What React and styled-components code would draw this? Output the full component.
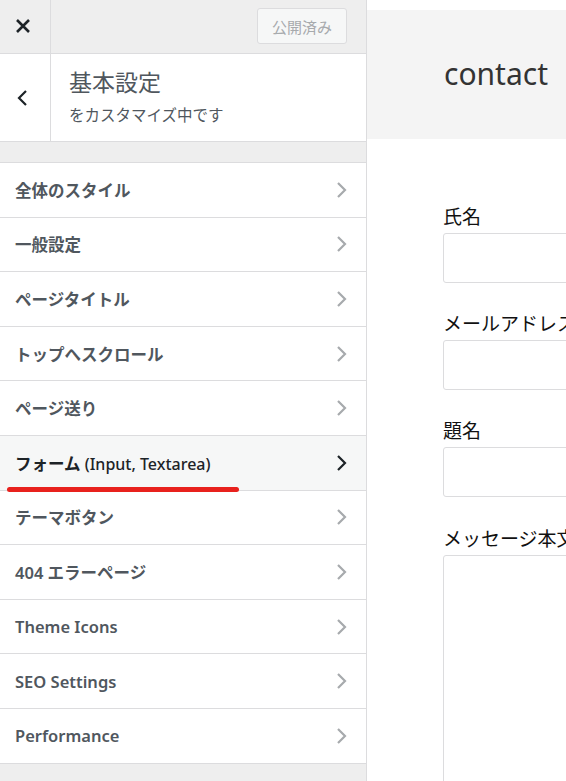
import styled, { createGlobalStyle } from "styled-components";

const GlobalStyle = createGlobalStyle`
  html, body { margin: 0; padding: 0; }
  body {
    font-family: "Noto Sans", "Noto Sans CJK JP", sans-serif;
    background: #fff;
    overflow: hidden;
  }
`;

const sections = [
  { title: "全体のスタイル" },
  { title: "一般設定" },
  { title: "ページタイトル" },
  { title: "トップへスクロール" },
  { title: "ページ送り" },
  { title: "フォーム", sub: "(Input, Textarea)", active: true },
  { title: "テーマボタン" },
  { title: "404 エラーページ" },
  { title: "Theme Icons" },
  { title: "SEO Settings" },
  { title: "Performance" },
];

const fields = ["氏名", "メールアドレス", "題名"];

const Chevron = ({ dir = "right", color }) => (
  <svg width="12" height="18" viewBox="0 0 12 18">
    <path
      d={dir === "right" ? "M3 2 L10 9 L3 16" : "M9 2 L2 9 L9 16"}
      fill="none"
      stroke={color}
      strokeWidth="2.2"
    />
  </svg>
);

const App = () => {
  return (
    <Page>
      <GlobalStyle />
      <Sidebar>
        <Header>
          <CloseBtn>
            <svg width="16" height="16" viewBox="0 0 16 16">
              <path d="M2 2 L14 14 M14 2 L2 14" stroke="#1d2327" strokeWidth="2.6" />
            </svg>
          </CloseBtn>
          <HeaderRight>
            <PublishBtn>公開済み</PublishBtn>
          </HeaderRight>
        </Header>
        <TitleBar>
          <BackBtn>
            <Chevron dir="left" color="#1d2327" />
          </BackBtn>
          <TitleText>
            <h2>基本設定</h2>
            <span>をカスタマイズ中です</span>
          </TitleText>
        </TitleBar>
        <List>
          {sections.map((s) => (
            <Item key={s.title} $active={s.active}>
              <ItemLabel $active={s.active}>
                {s.title}
                {s.sub && <small> {s.sub}</small>}
              </ItemLabel>
              <Chevron color={s.active ? "#1d2327" : "#a7aaad"} />
              {s.active && <Mark />}
            </Item>
          ))}
        </List>
      </Sidebar>
      <Preview>
        <Hero>
          <h1>contact</h1>
        </Hero>
        <Form>
          {fields.map((f) => (
            <Field key={f}>
              <label>{f}</label>
              <Input />
            </Field>
          ))}
          <Field>
            <label>メッセージ本文</label>
            <TextArea />
          </Field>
        </Form>
      </Preview>
    </Page>
  );
};

export default App;

const Page = styled.div`
  display: flex;
  width: 566px;
  height: 781px;
  overflow: hidden;
`;

const Sidebar = styled.div`
  width: 366px;
  flex-shrink: 0;
  background: #eeeeee;
  border-right: 1px solid #dcdcde;
  display: flex;
  flex-direction: column;
`;

const Header = styled.div`
  display: flex;
  height: 53px;
  border-bottom: 1px solid #dcdcde;
  box-sizing: content-box;
`;

const CloseBtn = styled.div`
  width: 51px;
  border-right: 1px solid #dcdcde;
  display: flex;
  align-items: center;
  justify-content: center;
  padding: 0 4px 2px 0;
  box-sizing: border-box;
`;

const HeaderRight = styled.div`
  flex: 1;
  display: flex;
  justify-content: flex-end;
  align-items: flex-start;
  padding: 8px 19px 0 0;
`;

const PublishBtn = styled.div`
  width: 90px;
  height: 36px;
  box-sizing: border-box;
  border: 1px solid #dcdcde;
  border-radius: 3px;
  background: #f6f7f7;
  color: #a7aaad;
  font-family: "Noto Sans CJK JP", sans-serif;
  font-size: 15px;
  display: flex;
  align-items: center;
  justify-content: center;
`;

const TitleBar = styled.div`
  display: flex;
  height: 87px;
  background: #fff;
  border-bottom: 1px solid #dcdcde;
  box-sizing: content-box;
`;

const BackBtn = styled.div`
  width: 51px;
  border-right: 1px solid #dcdcde;
  display: flex;
  align-items: center;
  justify-content: center;
  padding-right: 4px;
  box-sizing: border-box;
`;

const TitleText = styled.div`
  padding: 10px 0 0 18px;
  font-family: "Noto Sans CJK JP", sans-serif;
  color: #50575e;
  > h2 {
    margin: 0;
    font-size: 23px;
    font-weight: 400;
    line-height: 34px;
  }
  > span {
    display: block;
    font-size: 15.5px;
    line-height: 24px;
    margin-top: 4px;
  }
`;

const List = styled.div`
  margin-top: 20px;
  border-top: 1px solid #dcdcde;
`;

const Item = styled.div`
  position: relative;
  height: 54.6px;
  box-sizing: border-box;
  border-bottom: 1px solid #dcdcde;
  background: ${(p) => (p.$active ? "#f6f7f7" : "#fff")};
  display: flex;
  align-items: center;
  justify-content: space-between;
  padding: 0 19px 0 15px;
`;

const ItemLabel = styled.span`
  font-family: "Noto Sans", "Noto Sans CJK JP", sans-serif;
  font-size: 16.5px;
  font-weight: 600;
  color: ${(p) => (p.$active ? "#1d2327" : "#50575e")};
  > small {
    font-size: 16px;
    font-weight: 500;
  }
`;

const Mark = styled.div`
  position: absolute;
  z-index: 2;
  left: 7px;
  top: 51px;
  width: 232px;
  height: 5px;
  border-radius: 3px;
  background: #e8211d;
`;

const Preview = styled.div`
  flex: 1;
  background: #fff;
  padding-top: 10px;
`;

const Hero = styled.div`
  height: 129px;
  background: #f4f4f4;
  padding-left: 77px;
  > h1 {
    margin: 0;
    padding-top: 44px;
    font-family: "Noto Sans", sans-serif;
    font-size: 30px;
    font-weight: 400;
    color: #333;
    line-height: 40px;
  }
`;

const Form = styled.div`
  padding: 62px 0 0 76px;
  display: flex;
  flex-direction: column;
  gap: 25.2px;
`;

const Field = styled.div`
  display: flex;
  flex-direction: column;
  > label {
    font-family: "Noto Sans CJK JP", sans-serif;
    font-size: 19px;
    color: #111;
    line-height: 30px;
    margin-bottom: 2px;
    white-space: nowrap;
  }
`;

const Input = styled.div`
  width: 200px;
  height: 50px;
  box-sizing: border-box;
  border: 1px solid #dcdcde;
  border-radius: 3px;
`;

const TextArea = styled(Input)`
  height: 300px;
`;
